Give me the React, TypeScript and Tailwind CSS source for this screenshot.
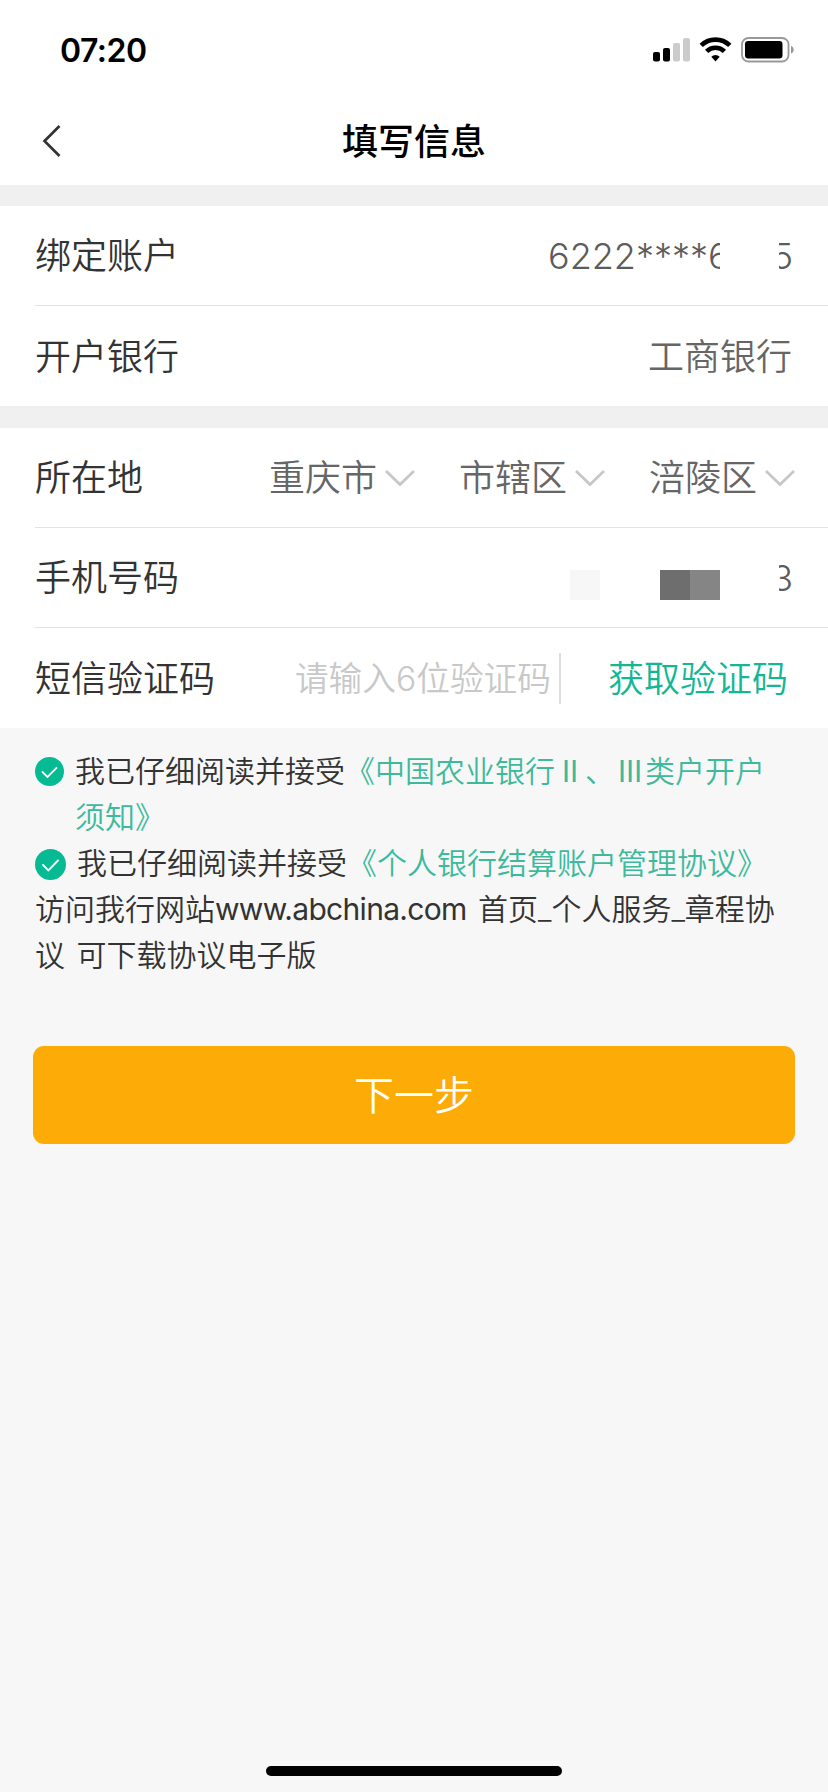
import type { ReactNode } from "react";

const regions = ["重庆市", "市辖区", "涪陵区"];

function StatusBar() {
  return (
    <div className="flex h-[98px] items-start justify-between pl-[60px] pr-[33px]">
      <span className="mt-[31px] text-[32px] leading-10 font-semibold tracking-[-0.5px] text-black">07:20</span>
      <svg className="mt-[36px]" width="142" height="27" viewBox="0 0 142 27">
        <rect x="0" y="16" width="7" height="9.5" rx="2" fill="#000" />
        <rect x="10" y="12" width="7" height="13.5" rx="2" fill="#000" />
        <rect x="20" y="7" width="7" height="18.5" rx="2" fill="#cbcbcb" />
        <rect x="30" y="2" width="7" height="23.5" rx="2" fill="#cbcbcb" />
        <g fill="none" stroke="#000" strokeWidth="4.6">
          <path d="M48.2 9.4a20.5 20.5 0 0 1 28.6 0" />
          <path d="M53.6 15.4a12.6 12.6 0 0 1 17.8 0" />
        </g>
        <path d="M62.5 25.4l-4.2-4.6a6 6 0 0 1 8.4 0z" fill="#000" />
        <rect x="89" y="2" width="46.5" height="23.5" rx="6.5" fill="none" stroke="#999" strokeWidth="1.8" />
        <rect x="92" y="5" width="37.5" height="17.5" rx="3.2" fill="#000" />
        <path d="M138 10c3.6 1 3.6 6.5 0 7.5z" fill="#999" />
      </svg>
    </div>
  );
}

function Header() {
  return (
    <header className="grid h-[87px] grid-cols-3 items-center">
      <svg className="mb-0.5 ml-[42px]" width="20" height="34" viewBox="0 0 20 34">
        <path d="M17.5 2L2.5 17l15 15" fill="none" stroke="#333" strokeWidth="2.7" />
      </svg>
      <h1 className="text-center text-[36px] leading-none font-medium text-black">填写信息</h1>
    </header>
  );
}

function Row({ label, last, children }: { label: string; last?: boolean; children: ReactNode }) {
  return (
    <div className={last ? "ml-[35px] h-[100px]" : "ml-[35px] h-[100px] border-b border-[#e3e3e3]"}>
      <div className="flex h-full items-center justify-between pt-px text-[36px] leading-[50px] text-[#666]">
        <span className="text-[#333]">{label}</span>
        {children}
      </div>
    </div>
  );
}

function Chevron() {
  return (
    <svg className="ml-2" width="30" height="18" viewBox="0 0 30 18">
      <path d="M1 2l14 13.5L29 2" fill="none" stroke="#c7c7c7" strokeWidth="2.8" />
    </svg>
  );
}

function Check({ size }: { size: number }) {
  return (
    <svg className="mt-[8.5px] shrink-0" width={size} height={size} viewBox="0 0 29 29">
      <circle cx="14.5" cy="14.5" r="14.5" fill="#06ba94" />
      <path d="M7.5 15l5 5 9-9.2" fill="none" stroke="#fff" strokeWidth="1.8" strokeLinecap="round" />
    </svg>
  );
}

// roman numerals take a full character cell
function Numeral({ children }: { children: string }) {
  return <span className="inline-block w-[30px] text-center font-normal">{children}</span>;
}

export default function App() {
  return (
    <div className="flex h-[1792px] w-[828px] flex-col overflow-hidden bg-[#f7f7f7] font-['Inter','Noto_Sans_CJK_SC',sans-serif] font-[350]">
      <div className="bg-white">
        <StatusBar />
        <Header />
      </div>

      <section className="border-t-[21px] border-[#f0f0f0] bg-white">
        <Row label="绑定账户">
          <div className="flex pr-[35px] text-[#5c5c5c]">
            <span className="w-[172px] overflow-hidden whitespace-nowrap">6222****6</span>
            {/* middle digits stay hidden, edges are cut */}
            <span className="ml-[59px] flex w-[14px] justify-end overflow-hidden">5</span>
          </div>
        </Row>
        <Row label="开户银行" last>
          <span className="pr-9">工商银行</span>
        </Row>
      </section>

      <section className="border-t-[22px] border-[#f0f0f0] bg-white">
        <Row label="所在地">
          <div className="flex gap-[44px] pr-[33px]">
            {regions.map((name) => (
              <button key={name} className="flex items-center">
                {name}
                <Chevron />
              </button>
            ))}
          </div>
        </Row>
        <Row label="手机号码">
          <div className="flex items-center pr-[35px]">
            <span className="mt-3.5 mr-[60px] size-[30px] bg-[#f7f7f7]" />
            <span className="mt-3.5 size-[30px] bg-[#6e6e6e]" />
            <span className="mt-3.5 mr-[59px] size-[30px] bg-[#858585]" />
            <span className="flex w-[14px] justify-end overflow-hidden text-[#5c5c5c]">3</span>
          </div>
        </Row>
        <Row label="短信验证码" last>
          <div className="flex items-center pr-10">
            <span className="text-[33.7px] text-[#c8c8c8]">请输入6位验证码</span>
            <span className="mr-[47px] ml-2 h-[51px] w-0.5 bg-[#ddd]" />
            <button className="text-[#14b795]">获取验证码</button>
          </div>
        </Row>
      </section>

      <div className="px-[35px] pt-[20px] text-[30px] leading-[46px] text-[#333]">
        <div className="flex">
          <Check size={29} />
          <p className="ml-[11px]">
            我已仔细阅读并接受
            <a className="text-[#3dba9c]">
              《中国农业银行<Numeral>Ⅱ</Numeral>、<Numeral>Ⅲ</Numeral>类户开户须知》
            </a>
          </p>
        </div>
        <div className="flex">
          <Check size={31} />
          <p className="ml-[11px]">
            我已仔细阅读并接受<a className="text-[#3dba9c]">《个人银行结算账户管理协议》</a>
          </p>
        </div>
        <p className="[word-spacing:3px]">
          访问我行网站<span className="font-normal tracking-[-0.7px]">www.abchina.com</span> 首页_个人服务_章程协议 可下载协议电子版
        </p>
      </div>

      <button className="mx-[33px] mt-[68px] h-[98px] rounded-[11px] bg-[#fdab06] pt-0.5 text-[40px] leading-none text-white">
        下一步
      </button>

      <div className="mx-auto mt-auto mb-4 h-2.5 w-[296px] rounded-full bg-black" />
    </div>
  );
}
